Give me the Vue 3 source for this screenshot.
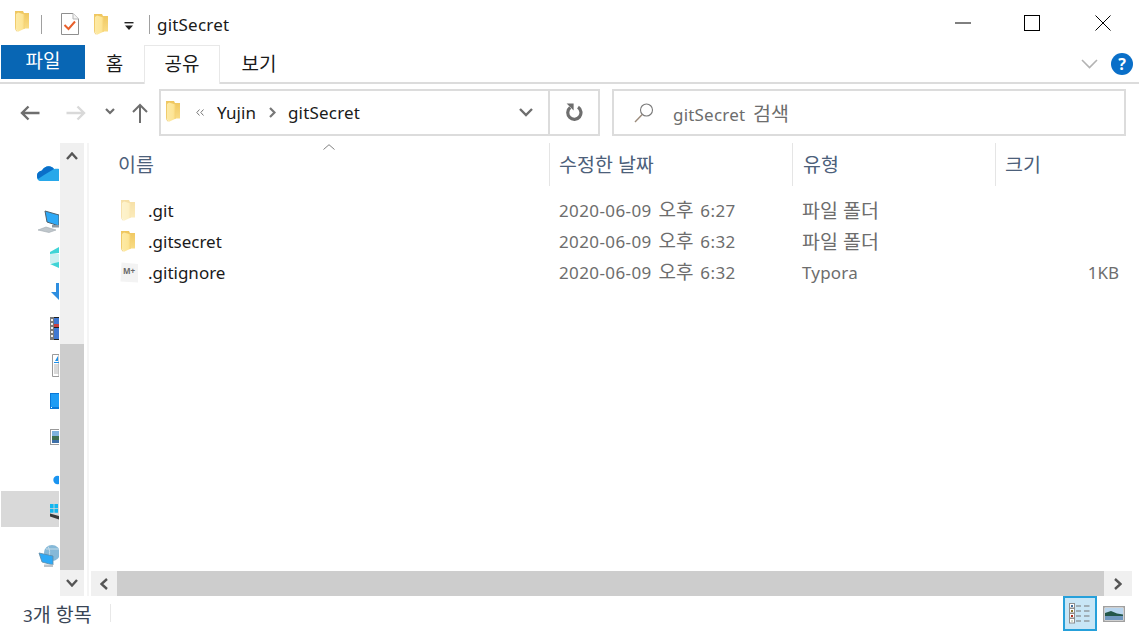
<script setup>
const files = [
  { name: '.git', date: '2020-06-09', ap: '오후', time: '6:27', type: '파일 폴더', ko: true, size: '', icon: 'hidden' },
  { name: '.gitsecret', date: '2020-06-09', ap: '오후', time: '6:32', type: '파일 폴더', ko: true, size: '', icon: 'folder' },
  { name: '.gitignore', date: '2020-06-09', ap: '오후', time: '6:32', type: 'Typora', ko: false, size: '1KB', icon: 'md' }
]
</script>

<template>
  <div class="win">
    <svg class="defs" width="0" height="0" aria-hidden="true">
      <defs>
        <linearGradient id="fgA" x1="0" y1="0" x2="1" y2="0">
          <stop offset="0" stop-color="#fdeaa6" />
          <stop offset="0.7" stop-color="#fde596" />
          <stop offset="1" stop-color="#f4cf6e" />
        </linearGradient>
        <linearGradient id="fgB" x1="0" y1="0" x2="0" y2="1">
          <stop offset="0" stop-color="#efc65e" />
          <stop offset="1" stop-color="#f9dc85" />
        </linearGradient>
        <symbol id="folder" viewBox="0 0 14 21">
          <path d="M0 0H8L9 2H14V17.5H0Z" fill="url(#fgB)" />
          <path d="M3 1.5L9.5 3.5V15.5L10 17.5L3 20.8L1 18V3Z" fill="url(#fgA)" />
          <path d="M0.4 0.5V18L2 20.5" stroke="#eec868" stroke-width="0.8" fill="none" />
        </symbol>
      </defs>
    </svg>

    <header class="title">
      <svg class="qa f1" width="14" height="21"><use href="#folder" /></svg>
      <span class="vsep s1"></span>
      <svg class="qa f2" width="18" height="22" viewBox="0 0 18 22">
        <path d="M0.5 0.5H12L17.5 6V21.5H0.5Z" fill="#fff" stroke="#8f8f8f" />
        <path d="M12 0.5V6H17.5" fill="#f4f4f4" stroke="#b5b5b5" />
        <path d="M3.5 12L7.5 16L14 8.5" fill="none" stroke="#e8602c" stroke-width="2" />
      </svg>
      <svg class="qa f3" width="14" height="21"><use href="#folder" /></svg>
      <svg class="qa f4" width="10" height="9" viewBox="0 0 10 9">
        <rect x="0.5" y="0" width="9" height="1.4" fill="#222" />
        <path d="M1 3.6H9L5 8Z" fill="#222" />
      </svg>
      <span class="vsep s2"></span>
      <span class="title-text wide">gitSecret</span>
      <div class="caption">
        <svg width="70" height="16" viewBox="0 0 70 16"><path d="M0 8H16" stroke="#000" /></svg>
        <svg width="16" height="16" viewBox="0 0 16 16"><rect x="0.5" y="0.5" width="15" height="15" fill="none" stroke="#000" /></svg>
        <svg class="cl" width="16" height="16" viewBox="0 0 16 16"><path d="M0.5 0.5L15.5 15.5M15.5 0.5L0.5 15.5" stroke="#000" fill="none" /></svg>
      </div>
    </header>

    <nav class="ribbon">
      <span class="tab file">파일</span>
      <span class="tab home">홈</span>
      <span class="tab share">공유</span>
      <span class="tab view">보기</span>
      <svg class="rib-chev" width="17" height="10" viewBox="0 0 17 10"><path d="M1 1L8.5 8.5L16 1" fill="none" stroke="#b3b3b3" stroke-width="1.6" /></svg>
      <span class="help">?</span>
    </nav>

    <section class="navbar">
      <svg class="nb back" width="20" height="16" viewBox="0 0 20 16"><path d="M19.5 8H2M8.5 1.5L2 8L8.5 14.5" fill="none" stroke="#6e6e6e" stroke-width="2.4" /></svg>
      <svg class="nb fwd" width="20" height="16" viewBox="0 0 20 16"><path d="M0.5 8H18M11.5 1.5L18 8L11.5 14.5" fill="none" stroke="#d9d9d9" stroke-width="2.4" /></svg>
      <svg class="nb drop" width="10" height="7" viewBox="0 0 10 7"><path d="M1 1L5 5L9 1" fill="none" stroke="#6e6e6e" stroke-width="2.2" /></svg>
      <svg class="nb up" width="16" height="20" viewBox="0 0 16 20"><path d="M8 20V2M1 9L8 2L15 9" fill="none" stroke="#6e6e6e" stroke-width="2" /></svg>
      <div class="addr">
        <svg class="addr-f" width="14" height="21"><use href="#folder" /></svg>
        <svg class="dbl" width="8" height="7" viewBox="0 0 8 7"><path d="M3.5 0.5L0.8 3.5L3.5 6.5M7.5 0.5L4.8 3.5L7.5 6.5" fill="none" stroke="#777" /></svg>
        <span class="crumb c1">Yujin</span>
        <svg class="arr" width="7" height="11" viewBox="0 0 7 11"><path d="M1 1L5.5 5.5L1 10" fill="none" stroke="#777" stroke-width="2.2" /></svg>
        <span class="crumb c2 wide">gitSecret</span>
        <svg class="addr-d" width="14" height="9" viewBox="0 0 14 9"><path d="M1 1L7 7L13 1" fill="none" stroke="#6e6e6e" stroke-width="2.4" /></svg>
        <div class="refresh">
          <svg width="18" height="19" viewBox="0 0 18 19">
            <path d="M5.2 4.6A6.6 6.6 0 1 0 13 4.2" fill="none" stroke="#6e6e6e" stroke-width="3.2" />
            <path d="M1.6 0.6H8.6V7.6Z" fill="#6e6e6e" />
          </svg>
        </div>
      </div>
      <div class="search">
        <svg width="20" height="20" viewBox="0 0 20 20">
          <circle cx="12.5" cy="7" r="6" fill="none" stroke="#7a7a7a" stroke-width="1.1" />
          <path d="M8.2 11.5L1 19" stroke="#9b8a7a" stroke-width="1.4" />
        </svg>
        <span class="wide gap">gitSecret <span class="ko">검색</span></span>
      </div>
    </section>

    <main class="main">
      <aside class="side">
        <div class="tree">
          <svg class="row one" viewBox="0 0 59 36"><path d="M37 21C37 17 40 16 42 15.5C44 11 51 9.5 54 14C57 13.5 59 14 59 14V26H41C38 26 37 24 37 21Z" fill="#28a8ea" /><path d="M37 21C37 17 40 16 42 15.5C44 11 51 9.5 54 14L44 20L38 24C37 23 37 22 37 21Z" fill="#0a6fc9" /></svg>
          <svg class="row two" viewBox="0 0 59 36"><path d="M45 7L59 11V22L47 18Z" fill="#2ea9f6" stroke="#50606c" /><path d="M52 21H59V23.5H52Z" fill="#8d99a3" /><path d="M38 26L46 23L56 26L49 28.5Z" fill="#bfc6cb" stroke="#a0a8ae" stroke-width="0.6" /></svg>
          <svg class="row" viewBox="0 0 59 36"><path d="M50 12L59 7V13L50 14Z" fill="#40d4d6" /><path d="M50 14H59V23H50Z" fill="#cdf0f1" /><path d="M50 24L59 22V28Z" fill="#40d4d6" /></svg>
          <svg class="row" viewBox="0 0 59 36"><path d="M56 7H59V24L51 16H56Z" fill="#2e8ee0" /></svg>
          <svg class="row" viewBox="0 0 59 36"><rect x="50" y="5" width="4" height="23" fill="#7a7a7a" /><path d="M51 7h2v2h-2zM51 11h2v2h-2zM51 15h2v2h-2zM51 19h2v2h-2zM51 23h2v2h-2z" fill="#eee" /><rect x="54" y="5" width="5" height="23" fill="#222" /><rect x="54" y="6" width="5" height="9" fill="#3f78d2" /><rect x="54" y="12" width="5" height="3" fill="#c9423f" /><rect x="54" y="16" width="5" height="11" fill="#3f78d2" /></svg>
          <svg class="row" viewBox="0 0 59 36"><path d="M52.5 6.5H59V28.5H52.5Z" fill="#fff" stroke="#9a9a9a" /><path d="M55 13L58 8V13Z" fill="#1e90e8" /><path d="M54 14H59V15H54Z" fill="#1e90e8" /><path d="M54 17h5M54 19h5M54 21h5M54 23h5M54 25h5" stroke="#b5b5b5" /></svg>
          <svg class="row" viewBox="0 0 59 36"><path d="M50 9H59V25H50Z" fill="#0a78d7" /><path d="M51 10H59V23H51Z" fill="#1e9cf5" /><rect x="51" y="23" width="1" height="1" fill="#fff" /></svg>
          <svg class="row" viewBox="0 0 59 36"><rect x="50.5" y="9.5" width="9" height="15" fill="#fff" stroke="#9a9a9a" /><rect x="52" y="11" width="7" height="5" fill="#7fb3dd" /><rect x="52" y="16" width="7" height="4" fill="#3f7050" /><rect x="52" y="20" width="7" height="3" fill="#3d6fa8" /></svg>
          <svg class="row" viewBox="0 0 59 36"><circle cx="57.5" cy="24" r="4.2" fill="#1a94f0" /></svg>
          <div class="row sel">
            <svg viewBox="0 0 59 36"><path d="M50 13H53.6V17H50ZM54.4 13H58V17H54.4ZM50 17.8H53.6V21.8H50ZM54.4 17.8H58V21.8H54.4Z" fill="#12b6ef" /><path d="M50 22.5L59 25V28.5L50 25.5Z" fill="#3a3a3a" /></svg>
          </div>
          <svg class="row net" viewBox="0 0 59 36"><circle cx="52" cy="15" r="8" fill="#86b9d8" /><path d="M48 8.5C50 12 50 15 49 18M46 11H59" stroke="#c4dcea" fill="none" /><path d="M39 15L53 18V27L42 24Z" fill="#2ea9f6" stroke="#5f8aa5" stroke-width="0.8" /><path d="M44 26.5H53V29H44Z" fill="#bcc4ca" /></svg>
        </div>
        <div class="vbar">
          <span class="btn"><svg width="12" height="8" viewBox="0 0 12 8"><path d="M1 7L6 1.5L11 7" fill="none" stroke="#555" stroke-width="2.4" /></svg></span>
          <span class="track"></span>
          <span class="thumb"></span>
          <span class="btn low"><svg width="12" height="8" viewBox="0 0 12 8"><path d="M1 1L6 6.5L11 1" fill="none" stroke="#555" stroke-width="2.4" /></svg></span>
        </div>
      </aside>

      <section class="list">
        <div class="cols">
          <svg class="sort" width="12" height="6" viewBox="0 0 12 6"><path d="M0.5 5.5L6 0.7L11.5 5.5" fill="none" stroke="#808080" /></svg>
          <span class="col c-name ko">이름</span>
          <span class="col c-date ko">수정한 날짜</span>
          <span class="col c-type ko">유형</span>
          <span class="col c-size ko">크기</span>
        </div>
        <div class="rows">
          <div v-for="f in files" :key="f.name" class="item">
            <span class="c-icon">
              <svg v-if="f.icon === 'hidden'" class="dim" width="14" height="21"><use href="#folder" /></svg>
              <svg v-else-if="f.icon === 'folder'" width="14" height="21"><use href="#folder" /></svg>
              <svg v-else class="md-ic" width="19" height="21" viewBox="0 0 19 21">
                <path d="M1.5 0.5L18 2V20.5L0.5 19.5Z" fill="#f3f3f3" />
                <text x="3" y="12" class="md">M+</text>
              </svg>
            </span>
            <span class="i-name">{{ f.name }}</span>
            <span class="i-date">{{ f.date }} <span class="ko">{{ f.ap }}</span> {{ f.time }}</span>
            <span class="i-type" :class="{ ko: f.ko, lat: !f.ko }">{{ f.type }}</span>
            <span class="i-size">{{ f.size }}</span>
          </div>
        </div>
        <div class="hbar">
          <span class="hbtn"><svg width="8" height="12" viewBox="0 0 8 12"><path d="M7 1L1.5 6L7 11" fill="none" stroke="#555" stroke-width="2.4" /></svg></span>
          <span class="hthumb"></span>
          <span class="hbtn r"><svg width="8" height="12" viewBox="0 0 8 12"><path d="M1 1L6.5 6L1 11" fill="none" stroke="#555" stroke-width="2.4" /></svg></span>
        </div>
      </section>
    </main>

    <footer class="status">
      <span class="count">3<span class="ko">개 항목</span></span>
      <span class="st-sep"></span>
      <span class="view-d">
        <svg width="22" height="21" viewBox="0 0 22 21">
          <rect x="0.5" y="0.5" width="5" height="4.5" fill="#fff" stroke="#8e8e8e" /><rect x="2" y="2" width="2" height="2" fill="#3f6f9f" />
          <rect x="0.5" y="5.5" width="5" height="4.5" fill="#fff" stroke="#8e8e8e" /><rect x="2" y="7" width="2" height="2" fill="#8a7a30" />
          <rect x="0.5" y="10.5" width="5" height="4.5" fill="#fff" stroke="#8e8e8e" /><rect x="2" y="12" width="2" height="2" fill="#b03020" />
          <rect x="0.5" y="15.5" width="5" height="4.5" fill="#fff" stroke="#8e8e8e" /><rect x="2" y="17" width="2" height="2" fill="#d0d8c8" />
          <path d="M7 3H12M15 3H20.5M7 8H12M15 8H20.5M7 13H12M15 13H20.5M7 18H12M15 18H20.5" stroke="#777" stroke-width="1.2" />
        </svg>
      </span>
      <span class="view-t">
        <svg width="22" height="16" viewBox="0 0 22 16">
          <rect x="0.75" y="0.75" width="20.5" height="14.5" fill="#fff" stroke="#a0a0a0" stroke-width="1.5" />
          <rect x="2" y="2" width="18" height="12" fill="#b9d6ef" />
          <path d="M2 7L8 5L14 7.5L20 8.5V12H2Z" fill="#24574a" />
          <path d="M2 10H20V14H2Z" fill="#6f97bf" />
        </svg>
      </span>
    </footer>
  </div>
</template>

<style scoped>
.win {
  width: 1139px;
  height: 632px;
  display: grid;
  grid-template-rows: 45px 39px 59px 453px 36px;
  overflow: hidden;
  background: #fff;
  color: #1a1a1a;
  font-family: "Noto Sans", "Noto Sans CJK KR", sans-serif;
  font-size: 17px;
}
.defs { position: absolute; }
.ko { font-size: 19.5px; }
.wide { letter-spacing: 0.2px; }
.gap { word-spacing: 3px; }

.title { display: flex; align-items: center; }
.qa { flex: none; }
.f1 { margin: -3px 0 0 15px; }
.vsep { flex: none; width: 1px; height: 19px; background: #a0a0a0; margin-top: 3px; }
.s1 { margin-left: 12px; }
.f2 { margin: 3px 0 0 19px; }
.f3 { margin: 4px 0 0 15px; }
.f4 { margin: 7px 0 0 16px; }
.s2 { margin-left: 15px; }
.title-text { margin: 4px 0 0 7px; }
.caption { margin-left: auto; margin-right: 28px; margin-top: 1px; display: flex; align-items: center; }
.caption svg { display: block; }
.caption svg:first-child { margin-right: -1px; }
.cl { margin-left: 55px; }

.ribbon { display: flex; align-items: flex-start; border-bottom: 2px solid #dcdcdc; box-sizing: border-box; }
.tab { flex: none; box-sizing: border-box; text-align: center; font-size: 19px; line-height: 35px; }
.file { width: 84px; height: 34px; margin-left: 1px; background: #0866b4; color: #fff; line-height: 33px; }
.home { width: 59px; line-height: 38px; }
.share { width: 76px; height: 39px; border: 1px solid #e8e8e8; border-bottom: none; background: #fff; line-height: 37px; }
.view { width: 78px; line-height: 38px; }
.rib-chev { margin: 14px 0 0 auto; }
.help { width: 22px; height: 22px; margin: 8px 6px 0 13px; border-radius: 50%; background: #0a6fc8; color: #fff; text-align: center; font-size: 16px; font-weight: 700; line-height: 22px; }

.navbar { display: flex; align-items: flex-start; }
.nb { flex: none; }
.back { margin: 21px 0 0 20px; }
.fwd { margin: 21px 0 0 26px; }
.drop { margin: 24px 0 0 19px; }
.up { margin: 19px 0 0 17px; }
.addr { box-sizing: border-box; width: 441px; height: 47px; margin: 5px 0 0 11px; border: 2px solid #dcdcdc; display: flex; align-items: center; }
.addr-f { flex: none; margin: -3px 0 0 5px; }
.dbl { margin: -1px 0 0 16px; }
.crumb { flex: none; }
.c1 { margin-left: 13px; }
.arr { margin-left: 13px; }
.c2 { margin-left: 12px; }
.addr-d { margin-left: auto; }
.refresh { width: 50px; height: 100%; margin-left: 15px; border-left: 2px solid #dcdcdc; display: flex; align-items: center; justify-content: center; box-sizing: border-box; }
.search { box-sizing: border-box; width: 514px; height: 47px; margin: 5px 0 0 12px; border: 2px solid #dcdcdc; display: flex; align-items: center; color: #6d6d6d; }
.search svg { margin-left: 20px; margin-right: 19px; }

.main { display: grid; grid-template-columns: 85px 1fr; min-height: 0; }
.side { display: grid; grid-template-columns: 60px 24px 1px; }
.tree { padding-top: 12px; display: flex; flex-direction: column; }
.row { display: block; width: 59px; height: 36px; flex: none; }
.one { margin-bottom: 13px; }
.sel { background: #d9d9d9; margin-left: 1px; width: 58px; margin-top: -1px; }
.sel svg { display: block; width: 59px; height: 36px; margin-left: -1px; }
.net { margin-top: 11px; }
.vbar { display: flex; flex-direction: column; background: #f0f0f0; }
.btn { height: 26px; flex: none; display: flex; align-items: center; justify-content: center; background: #f0f0f0; }
.track { height: 175px; flex: none; }
.thumb { flex: 1; background: #cdcdcd; }
.low { background: #f0f0f0; }

.list { display: flex; flex-direction: column; min-width: 0; border-left: 2px solid #f5f5f5; margin-left: 2px; position: relative; }
.cols { height: 42px; flex: none; display: grid; grid-template-columns: 461px 243px 203px 1fr; position: relative; }
.sort { position: absolute; left: 234px; top: 1px; }
.col { box-sizing: border-box; color: #4c607a; line-height: 43px; border-right: 1px solid #e5e5e5; padding-left: 9px; }
.c-name { padding-left: 29px; }
.c-type { padding-left: 10px; }
.c-size { border-right: none; width: 135px; }
.rows { flex: 1; padding-top: 10px; }
.item { height: 31px; display: grid; grid-template-columns: 59px 411px 243px 200px 117px; align-items: center; }
.c-icon { display: flex; padding-left: 32px; }
.c-icon svg { display: block; }
.md-ic { margin-left: -1px; }
.dim { opacity: 0.55; }
.md { font-size: 8px; font-weight: 700; fill: #6a6a6a; font-family: "Noto Sans", sans-serif; }
.i-name { color: #1a1a1a; }
.i-date, .i-type, .i-size { color: #6d6d6d; }
.i-date { letter-spacing: 0.4px; word-spacing: 2px; margin-top: -3px; }
.i-date .ko { letter-spacing: 0; font-size: 19px; }
.i-type.ko { margin-top: -3px; }
.lat { letter-spacing: 0.2px; }
.i-size { text-align: right; }
.hbar { height: 25px; flex: none; display: flex; margin: 0 7px 0 2px; }
.hbtn { width: 26px; flex: none; background: #f0f0f0; display: flex; align-items: center; justify-content: center; }
.hbtn.r { width: 28px; }
.hthumb { flex: 1; background: #cdcdcd; }

.status { display: flex; align-items: flex-start; }
.count { margin: 7px 0 0 23px; color: #3a4656; line-height: 24px; }
.st-sep { width: 1px; height: 18px; background: #e8e8e8; margin: 8px 0 0 18px; }
.view-d { box-sizing: border-box; width: 34px; height: 35px; margin-left: auto; background: #c8e6f6; border: 2px solid #26a0da; display: flex; align-items: center; justify-content: center; }
.view-t { margin: 10px 14px 0 6px; display: block; }
.view-t svg { display: block; }
</style>

<style>
html, body { margin: 0; background: #fff; }
</style>
